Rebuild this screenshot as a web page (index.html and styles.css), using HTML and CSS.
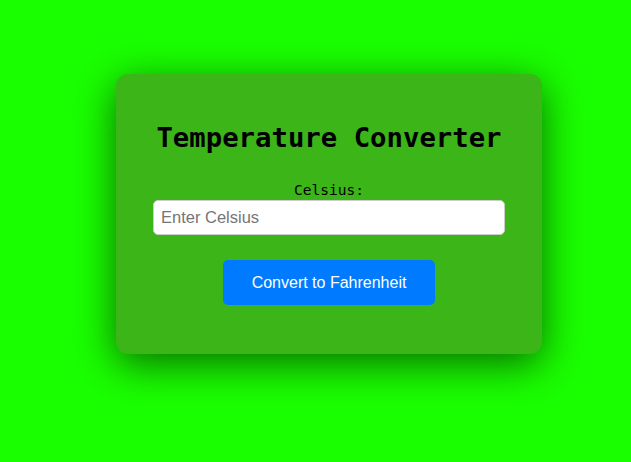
FILE: index.html
```html
<!DOCTYPE html>
<html>
<head>
<meta charset="utf-8">
<link rel="stylesheet" href="styles.css">
</head>
<body>
<div class="card">
  <h1 class="title">Temperature Converter</h1>
  <label class="label" for="c">Celsius:</label>
  <input class="field" id="c" type="text" placeholder="Enter Celsius">
  <button class="btn">Convert to Fahrenheit</button>
</div>
</body>
</html>
```
FILE: styles.css
```css
html, body { margin: 0; height: 100%; }
body {
  background: #1aff00;
  padding: 74px 0 0 116px;
  box-sizing: border-box;
}
.card {
  width: 426px;
  height: 280px;
  box-sizing: border-box;
  background: #3bb518;
  border-radius: 12px;
  box-shadow: 0 10px 40px rgba(0, 30, 0, 0.65);
  display: flex;
  flex-direction: column;
  align-items: center;
  padding-top: 48px;
}
.title {
  margin: 0;
  font-family: "DejaVu Sans Mono", monospace;
  font-weight: bold;
  font-size: 27.3px;
  line-height: 32px;
  color: #000;
}
.label {
  display: block;
  margin-top: 28px;
  font-family: "DejaVu Sans Mono", monospace;
  font-size: 14.5px;
  line-height: 17px;
  color: #000;
}
.field {
  box-sizing: border-box;
  width: 352px;
  height: 35px;
  margin: 1px 0 0;
  border: 1px solid #ccc;
  border-radius: 5px;
  padding: 0 7px;
  font-family: "Liberation Sans", Arial, sans-serif;
  font-size: 16.5px;
  background: #fff;
  outline: none;
}
.field::placeholder { color: #757575; }
.btn {
  margin-top: 25px;
  width: 212px;
  height: 45px;
  border: none;
  border-radius: 5px;
  background: #007bff;
  color: #fff;
  font-family: "Liberation Sans", Arial, sans-serif;
  font-size: 16px;
  padding: 0;
}
```
